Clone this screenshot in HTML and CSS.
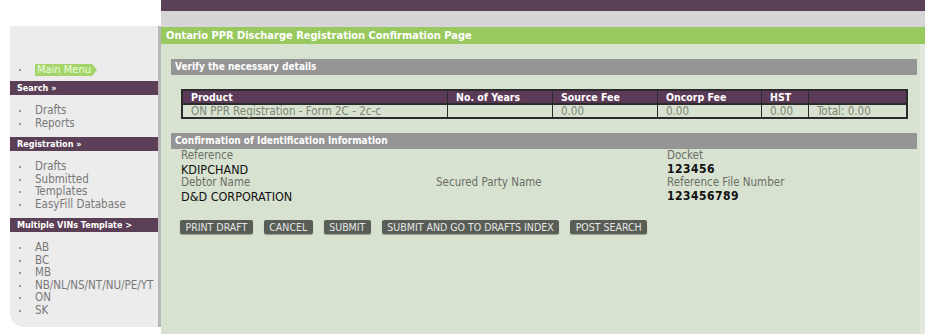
FILE: index.html
```html
<!DOCTYPE html>
<html lang="en">
<head>
    <meta charset="UTF-8">
    <title>Ontario PPR Discharge Registration Confirmation Page</title>
    <link rel="stylesheet" href="styles.css">
</head>
<body>

    <div class="page">
        <div class="side-col">
            <div class="sidebar">
                <ul class="menu main-menu">
                    <li><span class="tag">Main Menu</span></li>
                </ul>

                <div class="menu-head">Search &raquo;</div>
                <ul class="menu">
                    <li>Drafts</li>
                    <li>Reports</li>
                </ul>

                <div class="menu-head">Registration &raquo;</div>
                <ul class="menu">
                    <li>Drafts</li>
                    <li>Submitted</li>
                    <li>Templates</li>
                    <li>EasyFill Database</li>
                </ul>

                <div class="menu-head">Multiple VINs Template &gt;</div>
                <ul class="menu">
                    <li>AB</li>
                    <li>BC</li>
                    <li>MB</li>
                    <li>NB/NL/NS/NT/NU/PE/YT</li>
                    <li>ON</li>
                    <li>SK</li>
                </ul>
            </div>
        </div>

        <div class="main-col">
            <div class="top-bar"></div>
            <div class="sub-bar"></div>
            <div class="page-title">Ontario PPR Discharge Registration Confirmation Page</div>

            <div class="content">
                <div class="section-bar">Verify the necessary details</div>

                <table class="fees">
                    <tr>
                        <th class="c-product">Product</th>
                        <th class="c-years">No. of Years</th>
                        <th class="c-fee">Source Fee</th>
                        <th class="c-fee2">Oncorp Fee</th>
                        <th class="c-hst">HST</th>
                        <th></th>
                    </tr>
                    <tr>
                        <td>ON PPR Registration - Form 2C - 2c-c</td>
                        <td></td>
                        <td>0.00</td>
                        <td>0.00</td>
                        <td>0.00</td>
                        <td>Total: 0.00</td>
                    </tr>
                </table>

                <div class="section-bar">Confirmation of Identification Information</div>

                <div class="details">
                    <div class="label">Reference</div>
                    <div></div>
                    <div class="label">Docket</div>

                    <div class="value">KDIPCHAND</div>
                    <div></div>
                    <div class="value num">123456</div>

                    <div class="label">Debtor Name</div>
                    <div class="label">Secured Party Name</div>
                    <div class="label">Reference File Number</div>

                    <div class="value">D&amp;D CORPORATION</div>
                    <div></div>
                    <div class="value num">123456789</div>
                </div>

                <div class="actions">
                    <button class="btn">PRINT DRAFT</button>
                    <button class="btn">CANCEL</button>
                    <button class="btn">SUBMIT</button>
                    <button class="btn">SUBMIT AND GO TO DRAFTS INDEX</button>
                    <button class="btn">POST SEARCH</button>
                </div>
            </div>
        </div>
    </div>

</body>
</html>
```

FILE: styles.css
```css
body {
    margin: 0;
    background-color: white;
    font-family: "DejaVu Sans Condensed", "DejaVu Sans", sans-serif;
    font-stretch: condensed;
    font-size: 11px;
}
.page {
    display: grid;
    grid-template-columns: 161px 1fr;
    height: 334px;
}

/* left menu */
.side-col {
    padding: 26px 0 7px 10px;
}
.sidebar {
    height: 100%;
    box-sizing: border-box;
    background-color: #ececec;
    border-right: 3px solid #b8b8b8;
    border-bottom-left-radius: 14px;
    padding-top: 37px;
}
.menu {
    list-style: none;
    margin: 0 0 8px 0;
    padding: 9px 0 0 0;
}
.menu li {
    position: relative;
    padding-left: 25px;
    line-height: 12.5px;
    color: #787878;
    font-size: 11.5px;
}
.menu li::before {
    content: "";
    position: absolute;
    left: 9px;
    top: 6px;
    width: 2px;
    height: 2px;
    background-color: #9a9a9a;
}
.main-menu {
    padding: 0;
    margin-bottom: 5px;
}
.tag {
    position: relative;
    display: inline-block;
    background-color: #a3d56a;
    color: #eefde0;
    padding: 0 1px 0 2px;
    line-height: 12px;
    font-size: 11px;
}
.tag::after {
    content: "";
    position: absolute;
    right: -5px;
    top: 0;
    border-left: 5px solid #a3d56a;
    border-top: 6px solid transparent;
    border-bottom: 6px solid transparent;
}
.menu-head {
    background-color: #5b3f57;
    color: white;
    font-weight: bold;
    padding-left: 7px;
    height: 14px;
    line-height: 14px;
    font-size: 9px;
}

/* main area */
.main-col {
    display: flex;
    flex-direction: column;
}
.top-bar {
    height: 11px;
    background-color: #5b4157;
}
.sub-bar {
    height: 16px;
    background-color: #d6d6d9;
}
.page-title {
    height: 17px;
    line-height: 17px;
    background-color: #98c95e;
    color: white;
    font-weight: bold;
    font-size: 11px;
    padding-left: 5px;
}
.content {
    flex: 1;
    background-color: #d8e2d0;
    border-right: 5px solid #e2e9dc;
    padding: 15px 3px 0 10px;
}
.section-bar {
    background-color: #959595;
    color: white;
    font-weight: bold;
    font-size: 10px;
    height: 16px;
    line-height: 16px;
    padding-left: 4px;
}
.fees {
    width: 727px;
    margin: 14px 0 14px 10px;
    border-collapse: collapse;
    border: 2px solid #2b2b2b;
}
.fees th,
.fees td {
    text-align: left;
    padding: 0 0 0 8px;
    border-left: 1px solid #2b2b2b;
    height: 12px;
    line-height: 12px;
}
.fees th {
    background-color: #5b3a57;
    color: white;
    font-weight: bold;
    font-size: 10.5px;
    border-bottom: 2px solid #2b2b2b;
}
.fees td {
    color: #7c8775;
    font-size: 11.5px;
}
.c-product { width: 256px; }
.c-years { width: 96px; }
.c-fee { width: 96px; }
.c-fee2 { width: 95px; }
.c-hst { width: 38px; }

.details {
    display: grid;
    grid-template-columns: 255px 231px 1fr;
    padding-left: 10px;
}
.label {
    color: #6a6f66;
    line-height: 13.5px;
    font-size: 11.5px;
}
.value {
    color: #111;
    line-height: 13.5px;
    font-size: 12.5px;
    font-weight: 500;
}
.num {
    font-size: 12px;
    font-weight: bold;
    letter-spacing: 0.5px;
}

.actions {
    display: flex;
    gap: 11px;
    margin: 17px 0 0 9px;
}
.btn {
    background-color: #585e56;
    color: #e6e6e6;
    border: none;
    border-radius: 2px;
    font-family: "DejaVu Sans Condensed", "DejaVu Sans", sans-serif;
    font-stretch: condensed;
    font-size: 10.5px;
    height: 14px;
    line-height: 14px;
    padding: 0 5.5px;
    box-shadow: 0 1px 1px rgba(0, 0, 0, 0.3);
}
```
